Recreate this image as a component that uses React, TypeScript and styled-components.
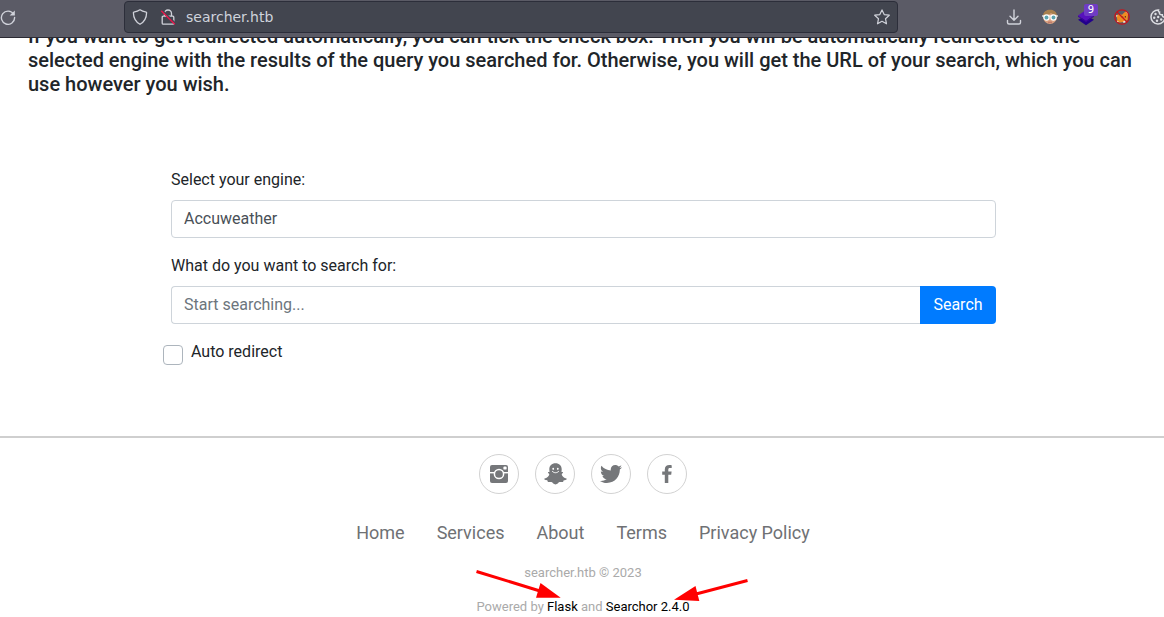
import React from "react";
import styled, { createGlobalStyle } from "styled-components";
import { IoLogoTwitter } from "react-icons/io";

const GlobalStyle = createGlobalStyle`
  *, *::before, *::after { box-sizing: border-box; }
  html, body, #root { height: 100%; }
  body {
    margin: 0;
    background: #fff;
    color: #212529;
    font-family: Roboto, "Liberation Sans", sans-serif;
    font-size: 16px;
    line-height: 24px;
  }
`;

const Shell = styled.div`
  display: flex;
  flex-direction: column;
  height: 100vh;
  overflow: hidden;
`;

const Toolbar = styled.header`
  display: flex;
  align-items: center;
  flex: none;
  height: 38px;
  padding-bottom: 4px;
  background: #5b5b66;
  border-bottom: 1px solid #2b2a33;
  color: #d0d2da;
  overflow: hidden;
`;

const ToolButton = styled.button`
  display: flex;
  flex: none;
  padding: 0;
  border: 0;
  background: none;
  color: inherit;
`;

const AddressBar = styled.div`
  display: flex;
  align-items: center;
  flex: 1;
  gap: 12px;
  height: 32px;
  margin: 1px 108px 0;
  padding: 0 7px;
  background: #42454f;
  border: 1px solid #2c2e3a;
  border-radius: 4px;
`;

const Address = styled.input`
  flex: 1;
  min-width: 0;
  margin-left: -2px;
  padding: 0;
  border: 0;
  background: none;
  color: #cfd3dc;
  font: 14px/20px "DejaVu Sans", sans-serif;
  outline: none;
`;

const Extensions = styled.div`
  display: flex;
  align-items: center;
  flex: none;
  gap: 20px;
  margin-right: -2px;
`;

const BadgeHolder = styled.span`
  position: relative;
  display: flex;
  margin: 0 -1px;
`;

const Badge = styled.span`
  position: absolute;
  top: -4px;
  right: -3px;
  width: 14px;
  height: 12px;
  border-radius: 2px;
  background: #6f3cc4;
  color: #fff;
  font: 10px/12px "DejaVu Sans", sans-serif;
  text-align: center;
`;

const Viewport = styled.div`
  flex: 1;
  min-height: 0;
  overflow: hidden;
`;

const Page = styled.main`
  margin-top: -14px;
  padding: 0 25px 71px 28px;
`;

const Intro = styled.h5`
  margin: 0 0 72px;
  font-size: 20px;
  line-height: 24px;
  font-weight: 500;
`;

const SearchForm = styled.form`
  max-width: 825px;
  margin: 0 auto;
`;

const Field = styled.div`
  margin-bottom: 16px;
`;

const FieldLabel = styled.label`
  display: block;
  margin-bottom: 8px;
`;

const EngineSelect = styled.select`
  display: block;
  appearance: none;
  width: 100%;
  height: 38px;
  padding: 6px 12px;
  border: 1px solid #ced4da;
  border-radius: 4px;
  background: #fff;
  color: #495057;
  font: inherit;
`;

const InputGroup = styled.div`
  display: flex;
`;

const QueryInput = styled.input`
  flex: 1;
  min-width: 0;
  height: 38px;
  padding: 5px 12px 7px;
  border: 1px solid #ced4da;
  border-right: 0;
  border-radius: 4px 0 0 4px;
  background: #fff;
  color: #495057;
  font: inherit;
  &::placeholder { color: #6c757d; opacity: 1; }
`;

const SearchButton = styled.button`
  min-width: 76px;
  height: 38px;
  padding: 6px 13px;
  border: 0;
  border-radius: 0 4px 4px 0;
  background: #007bff;
  color: #fff;
  font: inherit;
`;

const CheckRow = styled.div`
  display: flex;
  gap: 8px;
  margin-left: -8px;
`;

const CheckBox = styled.input`
  appearance: none;
  width: 20px;
  height: 20px;
  margin: 5px 0 0;
  border: 1px solid #adb5bd;
  border-radius: 4px;
  background: #fff;
`;

const Footer = styled.footer`
  position: relative;
  padding: 16px 0 0 2px;
  border-top: 2px solid #cfcfcf;
  text-align: center;
`;

const Socials = styled.div`
  display: flex;
  justify-content: center;
  gap: 16px;
  margin-bottom: 25px;
`;

const SocialLink = styled.a`
  display: flex;
  align-items: center;
  justify-content: center;
  width: 40px;
  height: 40px;
  border: 1px solid #d2d2d2;
  border-radius: 50%;
  color: #75777a;
`;

const FooterNav = styled.nav`
  display: flex;
  justify-content: center;
  gap: 32px;
  margin-bottom: 16px;
  font-size: 18px;
  line-height: 28px;
`;

const NavLink = styled.a`
  color: #6f7174;
  text-decoration: none;
`;

const Note = styled.p`
  margin: 0 0 14px;
  color: #aaa;
  font-size: 13px;
  line-height: 20px;
`;

const CreditLink = styled.a`
  color: #000;
  text-decoration: none;
`;

const Arrows = styled.svg`
  position: absolute;
  top: 122px;
  left: calc(50% - 112px);
`;

const ReloadIcon = () => (
  <svg width="16" height="16" viewBox="0 0 16 16" fill="none" stroke="currentColor" strokeWidth="1.4">
    <path d="M13.6 5.2A6.6 6.6 0 1 0 14.6 8.5" strokeLinecap="round" />
    <path d="M14.8 1.4v5.2H9.6z" fill="currentColor" stroke="none" />
  </svg>
);

const ShieldIcon = () => (
  <svg width="16" height="16" viewBox="0 0 16 16" fill="none" stroke="currentColor" strokeWidth="1.3" strokeLinejoin="round">
    <path d="M8 .8c2 1.5 4 2 6.2 2.4.3 0 .4.3.4.6-.1 5-1.9 9-6.6 11.5C3.300 12.800 1.500 8.800 1.400 3.800c0-.3.1-.6.4-.6C4 2.800 6 2.300 8 .8z" />
  </svg>
);

const LockOffIcon = () => (
  <svg width="16" height="16" viewBox="0 0 16 16" fill="none">
    <path d="M4.500 7.200V4.500a3.500 3.500 0 0 1 7 0v2.700M3.200 7.200h9.600a1 1 0 0 1 1 1v6a1 1 0 0 1-1 1H3.200a1 1 0 0 1-1-1v-6a1 1 0 0 1 1-1z" stroke="currentColor" strokeWidth="1.3" />
    <path d="M2.500 1.500 15.500 14.300" stroke="#42454f" strokeWidth="1.500" />
    <path d="M1.200 1.800 14.800 15.200" stroke="#e2164a" strokeWidth="1.500" />
  </svg>
);

const StarIcon = () => (
  <svg width="16" height="16" viewBox="0 0 16 16" fill="none" stroke="currentColor" strokeWidth="1.2" strokeLinejoin="round">
    <path d="m8 .9 2.200 4.700 5.100.6-3.800 3.500 1 5.100L8 12.300l-4.500 2.500 1-5.100L.7 6.200l5.100-.6z" />
  </svg>
);

const DownloadIcon = () => (
  <svg width="16" height="16" viewBox="0 0 16 16" fill="none" stroke="currentColor" strokeWidth="1.4" strokeLinecap="round" strokeLinejoin="round">
    <path d="M8 1v10M4 7.200l4 4 4-4M1.500 11.500v2a1.500 1.500 0 0 0 1.500 1.500h10a1.500 1.500 0 0 0 1.500-1.500v-2" />
  </svg>
);

const FaceIcon = () => (
  <svg width="16" height="16" viewBox="0 0 16 16">
    <ellipse cx="8" cy="8" rx="6.800" ry="7" fill="#d9a181" />
    <path d="M1 7.500C1 3 4 .8 8 .8s7 2.200 7 6.700c-2-2-4-1.600-6-3.500-2 2.200-5 1.500-8 3.500z" fill="#a8804e" />
    <path d="M0 7h16" stroke="#f4f7f7" strokeWidth="1.200" />
    <circle cx="4.500" cy="8.500" r="2.600" fill="#5ba2ae" stroke="#fff" strokeWidth="1.200" />
    <circle cx="11.500" cy="8.500" r="2.600" fill="#5ba2ae" stroke="#fff" strokeWidth="1.200" />
    <path d="M6 13.200h4" stroke="#b76b61" strokeWidth="1" />
  </svg>
);

const LayersIcon = () => (
  <svg width="18" height="18" viewBox="0 0 18 18">
    <path d="m1 11.800 8-4 8 4-8 5.400z" fill="#22008c" />
    <path d="m1 7.500 8-5.500 8 5.500-8 5.500z" fill="#5711bd" />
    <path d="m1 7.500 8 5.500 8-5.500v1.300l-8 5.500-8-5.500z" fill="#3b049b" />
  </svg>
);

const NoFoxIcon = () => (
  <svg width="16" height="16" viewBox="0 0 16 16">
    <path d="M2.200 6.500 5 5l3 .8 4-3.800 2 3.300-.4 5.600-3.900 2.100L6 13.400l-3.300-.6.600-2.500z" fill="#ef8c22" />
    <path d="m11.800 2 2.200 1.200-.4 2.400zM2 6l1.800.8-1.300 1.200zM9 12.600l2-1 1 1.600-2.500.8zM3 11.700l2 1-2 .6z" fill="#f4e3d5" />
    <path d="M7.800 8.200h1.500M11.300 7v1.600" stroke="#522313" strokeWidth="1" />
    <circle cx="8" cy="8" r="7.200" fill="none" stroke="#c4141d" strokeWidth="1.300" />
    <path d="m3 3 10 10" stroke="#c4141d" strokeWidth="1.300" />
  </svg>
);

const CookieIcon = () => (
  <svg width="16" height="16" viewBox="0 0 16 16">
    <path d="M8.500 1A7 7 0 1 0 15 8c-1.800.4-2.800-.6-2.700-2.200-2 .3-3.300-.8-2.700-2.600C8.500 3 8.200 2 8.500 1z" fill="none" stroke="#dcdde2" strokeWidth="1.500" />
    <g fill="#dcdde2">
      <circle cx="5.500" cy="5" r="1.200" />
      <circle cx="4.200" cy="8.700" r="1.200" />
      <circle cx="8.200" cy="8" r="1.200" />
      <circle cx="7" cy="11.800" r="1.200" />
      <circle cx="11.200" cy="10.500" r="1.200" />
    </g>
  </svg>
);

const InstagramIcon = () => (
  <svg width="18" height="18" viewBox="0 0 18 18">
    <rect width="18" height="18" rx="2" fill="currentColor" />
    <path d="M0 7.700h18" stroke="#fff" strokeWidth="1.400" />
    <circle cx="9" cy="9" r="4.600" fill="currentColor" stroke="#fff" strokeWidth="1.500" />
    <rect x="13.400" y="1.400" width="3.200" height="3.200" rx="1.200" fill="#fff" />
  </svg>
);

const SnapchatIcon = () => (
  <svg width="23" height="22" viewBox="0 0 23 22">
    <path
      fill="currentColor"
      d="M11.500.3c-3.700 0-6.200 2.500-6.200 6 0 1 .2 1.800.2 2.700-.4.300-1.200-.2-1.500.3-.4.8 1.200 1.200 1.300 2.100C5 13.200 2.800 15 .6 15.500c-.6.4-.2 1 .3 1.300.8.500 2 .4 2.500.8.3.4.1 1 .6 1.300.9.300 2.300-.3 3.500.2 1.300.6 2 2.300 4 2.300s2.700-1.700 4-2.300c1.200-.5 2.600.1 3.500-.2.500-.3.300-.9.600-1.300.5-.4 1.700-.3 2.500-.8.500-.3.900-.9.300-1.300-2.200-.5-4.400-2.300-4.700-4.100.1-.9 1.700-1.300 1.300-2.100-.3-.5-1.100 0-1.500-.3 0-.9.200-1.700.2-2.700 0-3.500-2.500-6-6.200-6z"
    />
    <ellipse cx="9.200" cy="5.800" rx=".9" ry="1.100" fill="#fff" />
    <ellipse cx="13.800" cy="5.800" rx=".9" ry="1.100" fill="#fff" />
    <path d="M8.300 8.300c1.700 2 4.700 2 6.400 0" fill="none" stroke="#fff" strokeWidth="1" strokeLinecap="round" />
  </svg>
);

const FacebookIcon = () => (
  <svg width="10" height="18" viewBox="0 0 10 18" fill="currentColor">
    <path d="M6.300 18V9.700h2.900L9.600 6.600H6.300V4.700c0-1 .3-1.600 1.600-1.600h1.800V.2C9.400.1 8.400 0 7.300 0 4.700 0 2.800 1.500 2.800 4.400v2.200H.200v3.100h2.600V18z" />
  </svg>
);

const socials = [
  { name: "Instagram", icon: <InstagramIcon /> },
  { name: "Snapchat", icon: <SnapchatIcon /> },
  { name: "Twitter", icon: <IoLogoTwitter size={24} /> },
  { name: "Facebook", icon: <FacebookIcon /> },
];

const links = ["Home", "Services", "About", "Terms", "Privacy Policy"];

export default function App() {
  return (
    <Shell>
      <GlobalStyle />
      <Toolbar>
        <ToolButton aria-label="Reload"><ReloadIcon /></ToolButton>
        <AddressBar>
          <ToolButton aria-label="Tracking protection"><ShieldIcon /></ToolButton>
          <ToolButton aria-label="Connection not secure"><LockOffIcon /></ToolButton>
          <Address aria-label="Address" defaultValue="searcher.htb" />
          <ToolButton aria-label="Bookmark"><StarIcon /></ToolButton>
        </AddressBar>
        <Extensions>
          <ToolButton aria-label="Downloads"><DownloadIcon /></ToolButton>
          <ToolButton aria-label="Profile extension"><FaceIcon /></ToolButton>
          <ToolButton aria-label="Technologies">
            <BadgeHolder><LayersIcon /><Badge>9</Badge></BadgeHolder>
          </ToolButton>
          <ToolButton aria-label="Proxy disabled"><NoFoxIcon /></ToolButton>
          <ToolButton aria-label="Cookies"><CookieIcon /></ToolButton>
        </Extensions>
      </Toolbar>
      <Viewport>
        <Page>
          <Intro>
            If you want to get redirected automatically, you can tick the check box. Then you will be
            automatically redirected to the selected engine with the results of the query you searched
            for. Otherwise, you will get the URL of your search, which you can use however you wish.
          </Intro>
          <SearchForm onSubmit={(e) => e.preventDefault()}>
            <Field>
              <FieldLabel htmlFor="engine">Select your engine:</FieldLabel>
              <EngineSelect id="engine" defaultValue="Accuweather">
                <option>Accuweather</option>
              </EngineSelect>
            </Field>
            <Field>
              <FieldLabel htmlFor="query">What do you want to search for:</FieldLabel>
              <InputGroup>
                <QueryInput id="query" placeholder="Start searching..." />
                <SearchButton type="submit">Search</SearchButton>
              </InputGroup>
            </Field>
            <CheckRow>
              <CheckBox type="checkbox" id="redirect" />
              <label htmlFor="redirect">Auto redirect</label>
            </CheckRow>
          </SearchForm>
        </Page>
        <Footer>
          <Socials>
            {socials.map((s) => (
              <SocialLink key={s.name} href="#" aria-label={s.name}>{s.icon}</SocialLink>
            ))}
          </Socials>
          <FooterNav>
            {links.map((l) => <NavLink key={l} href="#">{l}</NavLink>)}
          </FooterNav>
          <Note>searcher.htb © 2023</Note>
          <Note>
            Powered by <CreditLink href="#">Flask</CreditLink> and <CreditLink href="#">Searchor 2.4.0</CreditLink>
          </Note>
          <Arrows width="290" height="50" viewBox="470 560 290 50" aria-hidden="true">
            <g stroke="#f00" strokeWidth="3">
              <path d="M476.500 571.500 540 591" />
              <path d="M747.500 580.500 696 594" />
            </g>
            <g fill="#f00">
              <path d="m540.500 583-4.500 14.800 24.700 0z" />
              <path d="m695.500 586 3.800 15-25.300-1.300z" />
            </g>
          </Arrows>
        </Footer>
      </Viewport>
    </Shell>
  );
}
